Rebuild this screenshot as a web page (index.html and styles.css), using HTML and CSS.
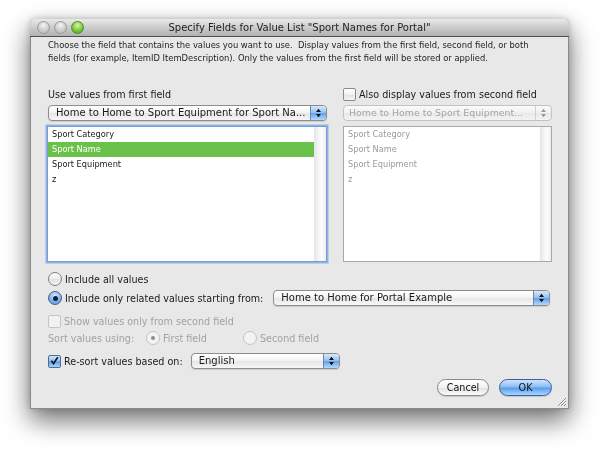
FILE: index.html
```html
<!DOCTYPE html>
<html lang="en">
<head>
<meta charset="UTF-8">
<title>Specify Fields for Value List</title>
<link rel="stylesheet" href="styles.css">
</head>
<body>

<div class="window">
  <div class="titlebar">
    <div class="lights">
      <span class="light"></span>
      <span class="light"></span>
      <span class="light green"></span>
    </div>
    <div class="title">Specify Fields for Value List "Sport Names for Portal"</div>
  </div>

  <div class="content">
    <p class="desc">Choose the field that contains the values you want to use.&nbsp; Display values from the first field, second field, or both<br>fields (for example, ItemID ItemDescription). Only the values from the first field will be stored or applied.</p>

    <div class="columns">
      <div class="col col-left">
        <div class="row label-row">Use values from first field</div>
        <div class="popup">
          <span class="popup-text">Home to Home to Sport Equipment for Sport Na...</span>
          <span class="cap"><svg width="15" height="16" viewBox="0 0 15 16"><path d="M5 7h5l-2.5-3.2z M5 9h5l-2.5 3.2z" fill="#111"/></svg></span>
        </div>
        <div class="list focus">
          <div class="items">
            <div class="item">Sport Category</div>
            <div class="item selected">Sport Name</div>
            <div class="item">Sport Equipment</div>
            <div class="item">z</div>
          </div>
          <div class="scroll"></div>
        </div>
      </div>

      <div class="col col-right">
        <div class="row label-row">
          <span class="checkbox"></span>
          <span class="opt-text">Also display values from second field</span>
        </div>
        <div class="popup disabled">
          <span class="popup-text">Home to Home to Sport Equipment...</span>
          <span class="cap"><svg width="15" height="16" viewBox="0 0 15 16"><path d="M5 7h5l-2.5-3.2z M5 9h5l-2.5 3.2z" fill="#9a9a9a"/></svg></span>
        </div>
        <div class="list disabled">
          <div class="items">
            <div class="item">Sport Category</div>
            <div class="item">Sport Name</div>
            <div class="item">Sport Equipment</div>
            <div class="item">z</div>
          </div>
          <div class="scroll"></div>
        </div>
      </div>
    </div>

    <div class="row radio-row first">
      <span class="radio"></span>
      <span class="opt-text">Include all values</span>
    </div>
    <div class="row radio-row">
      <span class="radio on"></span>
      <span class="opt-text">Include only related values starting from:</span>
      <div class="popup related">
        <span class="popup-text">Home to Home for Portal Example</span>
        <span class="cap"><svg width="15" height="16" viewBox="0 0 15 16"><path d="M5 7h5l-2.5-3.2z M5 9h5l-2.5 3.2z" fill="#111"/></svg></span>
      </div>
    </div>
    <div class="row show-row dim">
      <span class="checkbox dis"></span>
      <span class="opt-text">Show values only from second field</span>
    </div>
    <div class="row sort-row dim">
      <span class="sort-label">Sort values using:</span>
      <span class="sort-opt"><span class="radio dis on"></span><span class="opt-text">First field</span></span>
      <span class="sort-opt"><span class="radio dis"></span><span class="opt-text">Second field</span></span>
    </div>
    <div class="row resort-row">
      <span class="checkbox checked"><svg width="12" height="12" viewBox="0 0 12 12"><path d="M2.6 5.8l2.4 3 4.6-7" fill="none" stroke="#151515" stroke-width="1.8"/></svg></span>
      <span class="opt-text">Re-sort values based on:</span>
      <div class="popup lang">
        <span class="popup-text">English</span>
        <span class="cap"><svg width="15" height="16" viewBox="0 0 15 16"><path d="M5 7h5l-2.5-3.2z M5 9h5l-2.5 3.2z" fill="#111"/></svg></span>
      </div>
    </div>

    <div class="buttons">
      <button class="btn">Cancel</button>
      <button class="btn default">OK</button>
    </div>
  </div>

  <svg class="grip" width="12" height="12" viewBox="0 0 12 12">
    <path d="M11 3L3 11 M11 6L6 11 M11 9L9 11" stroke="#8c8c8c" stroke-width="1"/>
    <path d="M11 4L4 11 M11 7L7 11 M11 10L10 11" stroke="#fafafa" stroke-width="1"/>
  </svg>
</div>

</body>
</html>
```

FILE: styles.css
```css
html, body {height:100%;}
body {margin:0; padding:19px 0 0 30px; box-sizing:border-box; background:#fff; font-family:"DejaVu Sans", Verdana, sans-serif; color:#1a1a1a;}
.window {position:relative; width:539px; height:390px; box-sizing:border-box; background:#e8e8e8; border:1px solid #8a8a8a; border-top:none; border-radius:5px 5px 0 0; filter:drop-shadow(0 11px 13px rgba(0,0,0,0.5)) drop-shadow(0 0 3px rgba(0,0,0,0.22));}

/* title bar */
.titlebar {position:relative; height:17px; margin:0 -1px; background:linear-gradient(#e9e9e9, #cfcfcf 45%, #b1b1b1); border-bottom:1px solid #505050; border-radius:5px 5px 0 0; display:flex; align-items:center;}
.lights {display:flex; gap:4px; margin-left:7px;}
.light {width:11px; height:11px; border-radius:50%; border:0.5px solid #9a9a9a; background:radial-gradient(circle at 50% 30%, #f4f4f4, #c9c9c9 60%, #b5b5b5);}
.light.green {border-color:#4b8e22; background:radial-gradient(circle at 50% 30%, #d7f7a5, #7cc83c 55%, #4c9c1f);}
.title {position:absolute; left:0; right:0; text-align:center; font-size:10px; color:#222; top:3px;}

/* body */
.content {padding:2px 16px 0 16px; display:flex; flex-direction:column;}
.desc {margin:0; font-size:8.4px; line-height:13px; color:#222; padding-left:1px;}
.row {display:flex; align-items:center; height:16px; font-size:9.6px;}
.columns {display:flex; gap:16px; margin-top:21px;}
.col {display:flex; flex-direction:column;}
.col-left {width:280px;}
.col-right {width:209px;}
.col-left .label-row {padding-left:1px;}
.opt-text {margin-left:3px;}

/* popup buttons */
.popup {display:flex; height:16px; box-sizing:border-box; border:1px solid #8c8c8c; border-radius:4px; background:linear-gradient(#ffffff, #f3f3f3 50%, #e6e6e6 52%, #f7f7f7); font-size:10px; overflow:hidden; box-shadow:0 1px 1px rgba(0,0,0,0.12);}
.popup-text {flex:1; padding-left:7px; line-height:14px; white-space:nowrap; overflow:hidden;}
.cap {width:15px; border-left:1px solid #6f86a8; background:linear-gradient(#d8e8fb, #93bff3 48%, #649fea 52%, #b3dafd); display:flex;}
.cap svg {margin-top:-1px;}
.col .popup {margin-top:3px;}
.col-left .popup {margin-left:1px;}
.popup.disabled {border-color:#c2c2c2; color:#a5a5a5; box-shadow:none; font-size:9.4px; background:linear-gradient(#fbfbfb, #f0f0f0 50%, #e9e9e9 52%, #f3f3f3);}
.popup.disabled .popup-text {padding-left:5px;}
.popup.disabled .cap {background:none; border-left:1px solid #d0d0d0;}
.popup.related {width:277px; margin-left:10px;}
.popup.lang {width:149px; margin-left:8px;}

/* lists */
.list {display:flex; height:136px; margin-top:5px; box-sizing:border-box; background:#fff; border:1px solid #a9a9a9;}
.list.focus {border-color:#6f9fdc; box-shadow:0 0 0 1.5px rgba(118,160,222,0.75);}
.items {flex:1;}
.item {height:15px; line-height:15px; font-size:8.2px; padding-left:4px;}
.item.selected {background:#6bc24b; color:#fff;}
.scroll {width:12px; background:linear-gradient(90deg, #e4e4e4, #f6f6f6 40%, #fbfbfb 70%, #ececec);}
.list.disabled {color:#9a9a9a;}
.list.disabled .scroll {width:11px;}

/* checkbox and radio */
.checkbox {width:11px; height:11px; border:1px solid #8a8a8a; border-radius:2px; background:linear-gradient(#ffffff, #f0f0f0 50%, #e2e2e2 52%, #f6f6f6); flex-shrink:0; display:flex;}
.checkbox.dis {border-color:#c4c4c4; background:#f1f1f1;}
.checkbox.checked {border-color:#4f6b96; background:linear-gradient(#d3e6fb, #8dbcf2 48%, #5c9ae9 52%, #a7d5fd);}
.checkbox svg {margin:-1px 0 0 0;}
.radio {width:12px; height:12px; border-radius:50%; border:1px solid #7f7f7f; background:linear-gradient(#ffffff, #eeeeee 50%, #e1e1e1 52%, #f7f7f7); flex-shrink:0; display:flex; align-items:center; justify-content:center;}
.radio.on {border-color:#4a5e86; background:radial-gradient(circle at 50% 30%, #d8e9fc, #7fb3f0 55%, #5693e6);}
.radio.on::after {content:""; width:5px; height:5px; border-radius:50%; background:#141c30;}
.radio.dis {border-color:#c2c2c2; background:#f3f3f3;}
.radio.dis.on::after {background:#8d8d8d; width:4px; height:4px;}

.radio-row.first {margin-top:9px; padding-left:1px;}
.radio-row {margin-top:3px; padding-left:1px;}
.dim {color:#a2a2a2;}
.show-row {margin-top:7px; padding-left:1px;}
.sort-row {margin-top:1px; padding-left:1px;}
.sort-label {width:98px;}
.sort-opt {display:flex; align-items:center; width:97px;}
.resort-row {margin-top:7px; padding-left:1px;}

/* buttons */
.buttons {display:flex; justify-content:flex-end; gap:10px; margin-top:10px;}
.btn {height:17px; width:52px; padding:0; font-family:inherit; font-size:9.6px; color:#111; border:1px solid #8a8a8a; border-radius:9px; background:linear-gradient(#ffffff, #f2f2f2 50%, #e3e3e3 52%, #fafafa); box-shadow:0 1px 1px rgba(0,0,0,0.15);}
.btn.default {width:53px; border-color:#3d5f9e; background:linear-gradient(#cfe4fc, #88bcf4 48%, #5a9be9 52%, #a4d8ff);}

.grip {position:absolute; right:1px; bottom:1px;}
```
